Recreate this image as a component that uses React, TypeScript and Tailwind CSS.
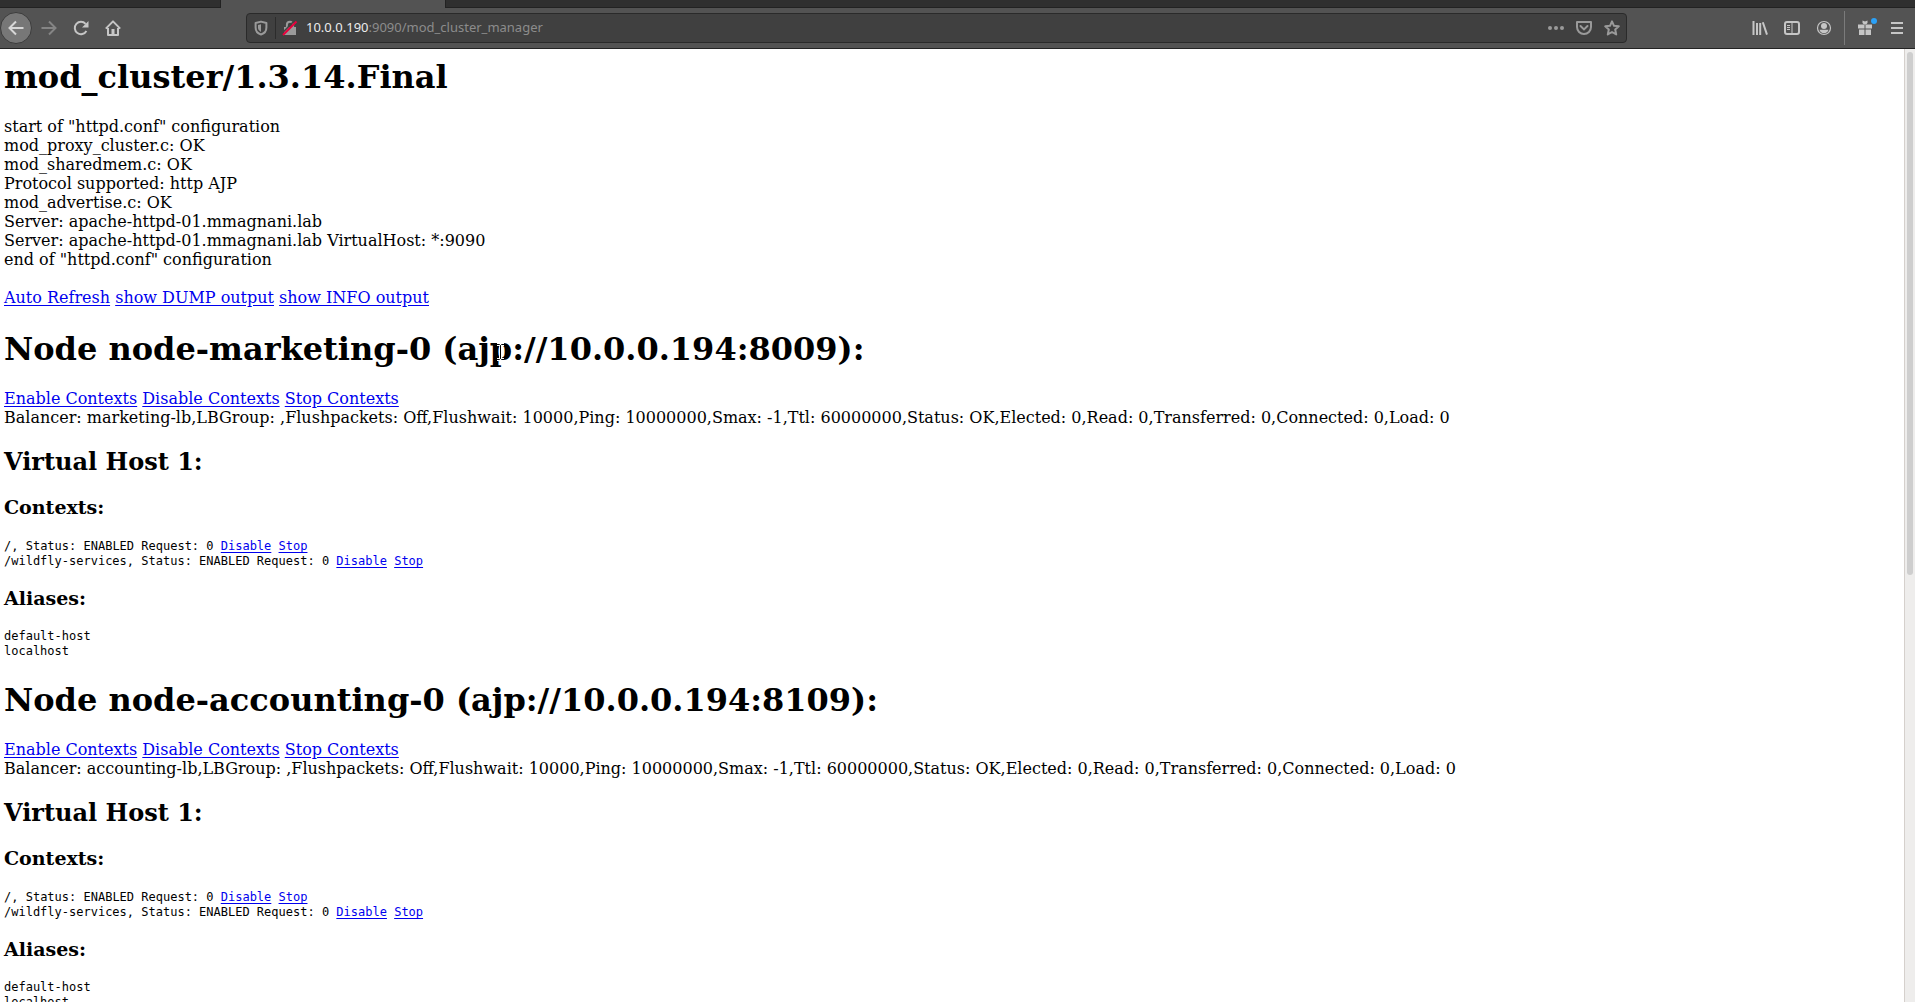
import React from 'react';

const link = 'text-[#0000ee] underline decoration-1 underline-offset-2';

type NodeInfo = { name: string; address: string; balancer: string };

const nodes: NodeInfo[] = [
  { name: 'node-marketing-0', address: 'ajp://10.0.0.194:8009', balancer: 'marketing-lb' },
  { name: 'node-accounting-0', address: 'ajp://10.0.0.194:8109', balancer: 'accounting-lb' },
];

const contexts = ['/', '/wildfly-services'];

const configuration = [
  'start of "httpd.conf" configuration',
  'mod_proxy_cluster.c: OK',
  'mod_sharedmem.c: OK',
  'Protocol supported: http AJP',
  'mod_advertise.c: OK',
  'Server: apache-httpd-01.mmagnani.lab',
  'Server: apache-httpd-01.mmagnani.lab VirtualHost: *:9090',
  'end of "httpd.conf" configuration',
];

function Icon({ children, className = '' }: { children: React.ReactNode; className?: string }) {
  return (
    <svg viewBox="0 0 16 16" className={`size-4 ${className}`} fill="none" stroke="currentColor" strokeWidth="2" aria-hidden="true">
      {children}
    </svg>
  );
}

function ToolButton({ label, className = '', children }: { label: string; className?: string; children: React.ReactNode }) {
  return (
    <button type="button" aria-label={label} className={`flex size-8 shrink-0 items-center justify-center ${className}`}>
      {children}
    </button>
  );
}

function Toolbar() {
  return (
    <div className="flex h-[41px] shrink-0 items-center border-b border-[#232323] bg-[#535353] text-[#c6c6c6]">
      <ToolButton label="Back" className="mr-px rounded-full border border-[#3c3c3c] bg-[#777777]">
        <Icon className="text-[#d6d6d6]">
          <path d="M15.5 8H1.5M8 1.5 1.5 8 8 14.5" />
        </Icon>
      </ToolButton>
      <ToolButton label="Forward" className="text-[#858585]">
        <Icon>
          <path d="M0.5 8h14M8 1.5 14.5 8 8 14.5" />
        </Icon>
      </ToolButton>
      <ToolButton label="Reload">
        <Icon>
          <path d="M13.4 11A6.2 6.2 0 1 1 12.6 3.8" />
          <path d="M15.5 1v6.5H9z" fill="currentColor" stroke="none" />
        </Icon>
      </ToolButton>
      <ToolButton label="Home">
        <Icon>
          <path d="M0.8 8.6 8 1.4l7.2 7.2M3 8v7h10V8" strokeLinejoin="round" />
          <path d="M6.5 9h3v6h-3z" fill="currentColor" stroke="none" />
        </Icon>
      </ToolButton>
      <div className="mr-[117px] ml-[117px] flex h-[30px] min-w-0 flex-1 items-center rounded-sm border border-[#2a2a2a] bg-[#404040] text-[#9a9a9a]">
        <button type="button" aria-label="Tracking protection" className="flex w-7 shrink-0 items-center justify-center">
          <Icon>
            <path d="M8 1.6 2.6 3v4.5c0 3.4 2.2 6 5.4 7 3.2-1 5.4-3.6 5.4-7V3z" strokeLinejoin="round" />
            <path d="M8 4.2 5 5v2.6c0 2 1.1 3.5 3 4.4z" fill="currentColor" stroke="none" />
          </Icon>
        </button>
        <div className="h-[22px] w-px bg-[#2c2c2c]" />
        <button type="button" aria-label="Connection is not secure" className="flex w-7 shrink-0 items-center justify-center">
          <Icon>
            <path d="M4.9 8V4.8a3.1 3.1 0 0 1 6.2 0V8" />
            <path d="M2 7h12v8H2z" fill="currentColor" stroke="none" />
            <path d="M0 13.2 12.6 0.6" stroke="#404040" strokeWidth="1.5" />
            <path d="M1 15 14.5 1.5" stroke="#e8003c" />
          </Icon>
        </button>
        <a href="#" aria-label="Address" className="min-w-0 flex-1 truncate pr-1 pl-0.5 font-['Noto_Sans',sans-serif] text-[13px] text-[#8c8c8c]">
          <span className="text-[#ececec]">10.0.0.190</span>:9090/mod_cluster_manager
        </a>
        <button type="button" aria-label="Page actions" className="flex w-7 shrink-0 items-center justify-center">
          <Icon>
            <g fill="currentColor" stroke="none">
              <circle cx="2" cy="8" r="2" />
              <circle cx="8" cy="8" r="2" />
              <circle cx="14" cy="8" r="2" />
            </g>
          </Icon>
        </button>
        <button type="button" aria-label="Save to Pocket" className="flex w-7 shrink-0 items-center justify-center">
          <Icon>
            <path d="M1 2h14v5a7 7 0 0 1-14 0z" strokeLinejoin="round" />
            <path d="M4.5 6 8 9.4 11.5 6" strokeLinecap="round" />
          </Icon>
        </button>
        <button type="button" aria-label="Bookmark this page" className="flex w-7 shrink-0 items-center justify-center">
          <Icon>
            <path d="m8 1.4 2 4.4 4.8.5-3.6 3.2 1 4.9L8 12l-4.2 2.4 1-4.9L1.2 6.3 6 5.8z" strokeLinejoin="round" />
          </Icon>
        </button>
      </div>
      <ToolButton label="Library">
        <Icon>
          <path d="M1.5 1v14M5 3v12M8.2 3v12M10.8 2.3 15 14.6" />
        </Icon>
      </ToolButton>
      <ToolButton label="Sidebars">
        <Icon>
          <rect x="1" y="2" width="14" height="12" rx="2" />
          <path d="M8 2v12" strokeWidth="1" />
          <path d="M3 5.5h3M3 7.5h3M3 9.5h3" strokeWidth="1" />
        </Icon>
      </ToolButton>
      <ToolButton label="Account">
        <Icon>
          <circle cx="8" cy="8" r="6.5" strokeWidth="1.2" />
          <circle cx="8" cy="6" r="3" fill="currentColor" stroke="none" />
          <path d="M3.5 9.8h9c-.5 2-2.3 3.4-4.5 3.4s-4-1.400-4.500-3.400z" fill="currentColor" stroke="none" />
        </Icon>
      </ToolButton>
      <div className="mx-1 h-[34px] w-px bg-[#7b7b7b]" />
      <ToolButton label="What's new" className="relative">
        <Icon>
          <g fill="currentColor" stroke="none">
            <path d="M1 4.500h6.500V8.500H1zM8.500 4.500H15V8.500H8.500zM2 9.500h5.500V15H2zM8.500 9.500H14V15H8.500z" />
            <path d="M5.500 0.500 8 1.500l2.500-1v2.500L9 4.500H7L5.500 3z" />
          </g>
        </Icon>
        <span className="absolute top-1.5 right-1 size-1.5 rounded-full bg-[#2ba1f7]" />
      </ToolButton>
      <ToolButton label="Open menu">
        <Icon>
          <path d="M2 3h12M2 8h12M2 13h12" />
        </Icon>
      </ToolButton>
      <div className="w-0.5" />
    </div>
  );
}

function NodeSection({ node }: { node: NodeInfo }) {
  return (
    <section>
      <h1 className="mt-[22px] mb-[21px] text-[32px] leading-[38px] font-bold">
        Node {node.name} ({node.address}):
      </h1>
      <a href="#" className={link}>Enable Contexts</a> <a href="#" className={link}>Disable Contexts</a>{' '}
      <a href="#" className={link}>Stop Contexts</a>
      <p>
        Balancer: {node.balancer},LBGroup: ,Flushpackets: Off,Flushwait: 10000,Ping: 10000000,Smax: -1,Ttl: 60000000,Status:
        OK,Elected: 0,Read: 0,Transferred: 0,Connected: 0,Load: 0
      </p>
      <h2 className="mt-[21px] mb-5 text-2xl leading-7 font-bold">Virtual Host 1:</h2>
      <h3 className="mb-[21px] text-[19px] leading-[22px] font-bold">Contexts:</h3>
      <pre className="font-['DejaVu_Sans_Mono',monospace] text-xs leading-[15px]">
        {contexts.map((path) => (
          <div key={path}>
            {path}, Status: ENABLED Request: 0 <a href="#" className={link}>Disable</a> <a href="#" className={link}>Stop</a>
          </div>
        ))}
      </pre>
      <h3 className="mt-[18px] mb-5 text-[19px] leading-[22px] font-bold">Aliases:</h3>
      <pre className="font-['DejaVu_Sans_Mono',monospace] text-xs leading-[15px]">{'default-host\nlocalhost'}</pre>
    </section>
  );
}

export default function App() {
  return (
    <div className="flex h-screen flex-col overflow-hidden bg-white">
      <div className="flex h-2 shrink-0 bg-[#535353]">
        <div className="w-[221px] border-r border-b border-[#222222] bg-[#2f2f2f]" />
        <div className="w-[224px] bg-[#535353]" />
        <div className="flex-1 border-b border-l border-[#222222] bg-[#2f2f2f]" />
      </div>
      <Toolbar />
      <div className="flex min-h-0 flex-1">
        <main className="relative min-w-0 flex-1 overflow-hidden px-1 pt-[9px] font-['DejaVu_Serif',serif] text-base leading-[19px] text-black">
          <h1 className="mb-[21px] text-[32px] leading-[38px] font-bold">mod_cluster/1.3.14.Final</h1>
          {configuration.map((line) => (
            <p key={line}>{line}</p>
          ))}
          <div className="mt-[19px] pb-px">
            <a href="#" className={link}>Auto Refresh</a> <a href="#" className={link}>show DUMP output</a>{' '}
            <a href="#" className={link}>show INFO output</a>
          </div>
          {nodes.map((node) => (
            <NodeSection key={node.name} node={node} />
          ))}
          <svg viewBox="0 0 9 18" className="absolute top-[294px] left-[496px] h-[18px] w-[9px]" fill="none" aria-hidden="true">
            <path d="M1 1.500h2.500l1 1 1-1H8M4.500 2.500v13M1 16.500h2.500l1-1 1 1H8" stroke="#ffffff" strokeWidth="3" />
            <path d="M1 1.500h2.500l1 1 1-1H8M4.500 2.500v13M1 16.500h2.500l1-1 1 1H8" stroke="#000000" />
          </svg>
        </main>
        <div className="w-[11px] shrink-0 border-l border-[#d5d0cc] bg-[#eeedec] px-0.5 pt-[3px]">
          <div className="h-[55%] rounded-full bg-[#cecece]" />
        </div>
      </div>
    </div>
  );
}
